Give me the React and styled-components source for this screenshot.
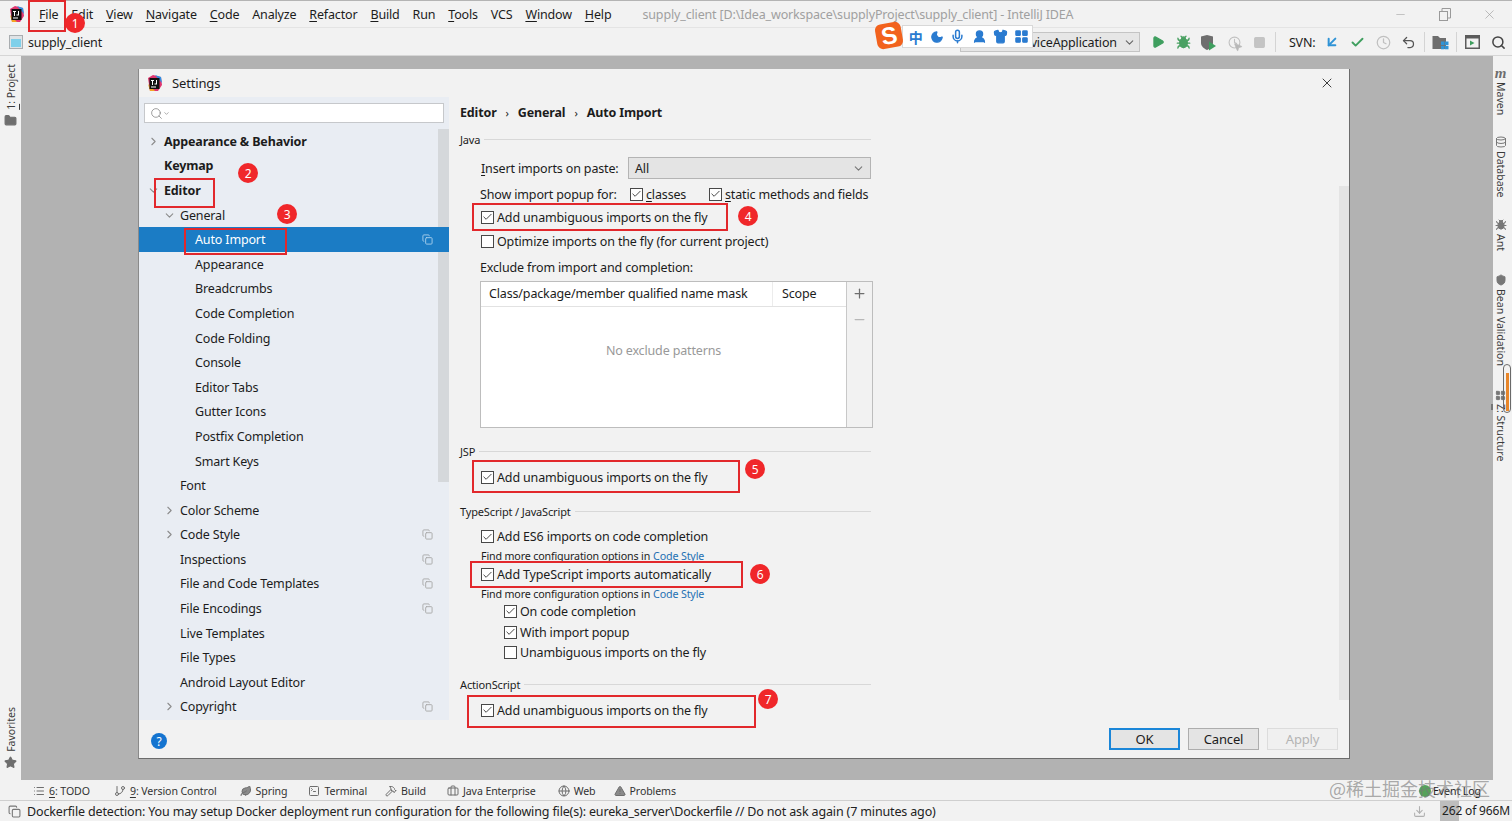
import React from "react";
import styled, { createGlobalStyle } from "styled-components";
import {
  ArrowDownLeft,
  Briefcase,
  Bug,
  Check,
  ChevronDown,
  ChevronRight,
  Clock,
  Copy,
  Database,
  Download,
  Folder,
  GitBranch,
  Globe,
  Hammer,
  LayoutGrid,
  Leaf,
  List,
  Mic,
  Minus,
  Moon,
  MousePointer2,
  Play,
  Plus,
  Search,
  Shield,
  Shirt,
  Square,
  SquareTerminal,
  Star,
  TriangleAlert,
  Undo2,
  UserRound,
  X,
} from "lucide-react";

const GlobalStyle = createGlobalStyle`
  html, body {
    margin: 0;
    padding: 0;
    background: #f2f2f2;
  }
  * {
    box-sizing: border-box;
  }
  u {
    text-underline-offset: 2px;
  }
`;

const Page = styled.div`
  position: relative;
  display: flex;
  flex-direction: column;
  width: 1512px;
  height: 821px;
  overflow: hidden;
  background: #f2f2f2;
  color: #1c1c1c;
  font-family: "Noto Sans", "Liberation Sans", sans-serif;
  font-size: 12.5px;
  letter-spacing: -0.15px;
  white-space: nowrap;
`;

const MenuBar = styled.div`
  display: flex;
  align-items: center;
  height: 28px;
  padding-left: 9px;
  border-top: 1px solid #b4b4b4;
  border-bottom: 1px solid #e4e4e4;
`;

const MenuItems = styled.div`
  display: flex;
  gap: 12.9px;
  margin-left: 15px;
`;

const WindowTitle = styled.div`
  margin-left: 31px;
  color: #a0a0a0;
  flex: 1;
`;

const WindowControls = styled.div`
  display: flex;
  align-items: center;
  gap: 31px;
  padding-right: 15px;
  color: #9a9a9a;
`;

const Toolbar = styled.div`
  display: flex;
  align-items: center;
  height: 28px;
  padding: 1px 1px 0 9px;
  border-bottom: 1px solid #d6d6d6;
`;

const ProjectName = styled.span`
  margin-left: 5px;
`;

const ToolGroup = styled.div`
  display: flex;
  align-items: center;
  margin-left: auto;
`;

const RunCombo = styled.div`
  display: flex;
  align-items: center;
  justify-content: flex-end;
  width: 180px;
  height: 20px;
  margin-right: 5px;
  padding-right: 3px;
  gap: 6px;
  background: #e6e6e6;
  border: 1px solid #c4c4c4;
`;

const ToolButton = styled.div`
  position: relative;
  display: flex;
  align-items: center;
  justify-content: center;
  width: 25.5px;
  height: 24px;
  color: ${(props) => props.$color || "#6e6e6e"};
`;

const CursorBadge = styled.span`
  position: absolute;
  right: 4px;
  bottom: 2px;
  display: flex;
  color: #b8b8b8;
`;

const ToolDivider = styled.div`
  width: 1px;
  height: 20px;
  margin: 0 2.75px;
  background: #d4d4d4;
`;

const SvnLabel = styled.span`
  margin: 0 4px 0 10px;
`;

const Workspace = styled.div`
  display: flex;
  height: 724px;
`;

const Stripe = styled.div`
  display: flex;
  flex-direction: column;
  align-items: center;
  justify-content: ${(props) => props.$justify || "flex-start"};
  flex: none;
  width: ${(props) => props.$width}px;
  padding: ${(props) => props.$padding};
  color: #3a3a3a;
  font-size: 10.5px;
  letter-spacing: 0;
`;

const StripeGroup = styled.div`
  display: flex;
  flex-direction: column;
  align-items: center;
  gap: 4px;
  color: #6e6e6e;
`;

const StripeItem = styled.div`
  display: flex;
  flex-direction: column;
  align-items: center;
  gap: 3px;
  margin-bottom: ${(props) => props.$gap || 0}px;
  color: #777;
`;

const StripeText = styled.span`
  writing-mode: vertical-rl;
  color: #3a3a3a;
  transform: ${(props) => (props.$flip ? "rotate(180deg)" : "none")};
  line-height: 14px;
`;

const MavenMark = styled.span`
  font-family: "Liberation Serif", serif;
  font-style: italic;
  font-weight: 700;
  font-size: 15px;
  line-height: 12px;
  color: #6e6e6e;
`;

const Backdrop = styled.div`
  flex: 1;
  padding: 13px 143px 21px 117px;
  background: #b2b2b2;
`;

const Dialog = styled.div`
  display: flex;
  flex-direction: column;
  height: 690px;
  background: #f2f2f2;
  border-right: 1px solid #6c6c6c;
  border-bottom: 1px solid #6c6c6c;
  border-left: 1px solid #8a8a8a;
`;

const DialogTitle = styled.div`
  display: flex;
  align-items: center;
  height: 28px;
  flex: none;
  padding: 0 14px 0 8px;
  gap: 10px;
  font-size: 13px;
`;

const CloseButton = styled.div`
  display: flex;
  margin-left: auto;
  color: #222;
`;

const DialogBody = styled.div`
  display: flex;
  height: 623px;
  flex: none;
  overflow: hidden;
`;

const Sidebar = styled.div`
  position: relative;
  flex: none;
  width: 310px;
  background: #e9edf3;
`;

const SearchBox = styled.div`
  display: flex;
  align-items: center;
  height: 20px;
  margin: 6px 5px 6px 5px;
  padding-left: 5px;
  background: #fff;
  border: 1px solid #c6c8cb;
  color: #777;
`;

const SideThumb = styled.div`
  position: absolute;
  top: 32px;
  right: 0;
  width: 11px;
  height: 353px;
  background: #d5d8db;
`;

const TreeRow = styled.div`
  position: relative;
  display: flex;
  align-items: center;
  height: 24.6px;
  padding-left: ${(props) => props.$indent}px;
  background: ${(props) => (props.$selected ? "#1b7cc5" : "transparent")};
  color: ${(props) => (props.$selected ? "#fff" : "#1c1c1c")};
  font-weight: ${(props) => (props.$bold ? 700 : 400)};
`;

const TreeArrow = styled.span`
  position: absolute;
  left: ${(props) => props.$indent - 17}px;
  display: flex;
  color: #8c8c8c;
`;

const TreeCopy = styled.span`
  position: absolute;
  right: 16px;
  display: flex;
  color: ${(props) => (props.$selected ? "#a9cfeb" : "#a8a8a8")};
`;

const Panel = styled.div`
  position: relative;
  flex: 1;
  padding-left: 11px;
`;

const PanelThumb = styled.div`
  position: absolute;
  top: 89px;
  right: 0;
  width: 10px;
  height: 514px;
  background: #e4e4e4;
`;

const Breadcrumb = styled.div`
  display: flex;
  align-items: center;
  gap: 9px;
  height: 30px;
  font-weight: 700;
`;

const CrumbSep = styled.span`
  font-weight: 400;
  font-size: 11px;
`;

const Form = styled.div`
  width: 411px;
`;

const SectionTitle = styled.div`
  display: flex;
  align-items: center;
  gap: 4px;
  height: ${(props) => props.$h}px;
  margin-top: ${(props) => props.$top || 0}px;
  padding-bottom: 2px;
  font-size: 11px;

  &::after {
    content: "";
    flex: 1;
    height: 1px;
    background: #d8d8d8;
  }
`;

const Row = styled.div`
  display: flex;
  align-items: center;
  height: ${(props) => props.$h}px;
  padding-left: ${(props) => props.$indent || 21}px;
  gap: 3px;
`;

const FieldLabel = styled.span`
  flex: none;
  width: ${(props) => props.$width}px;
`;

const OptionCell = styled.div`
  display: flex;
  align-items: center;
  flex: none;
  width: ${(props) => props.$width}px;
  gap: 3px;
`;

const Box = styled.span`
  display: flex;
  align-items: center;
  justify-content: center;
  flex: none;
  width: 13px;
  height: 13px;
  background: #fff;
  border: 1px solid #484848;
  color: #222;
`;

const ComboField = styled.div`
  display: flex;
  align-items: center;
  justify-content: space-between;
  width: 244px;
  height: 22px;
  margin-left: -3px;
  padding: 0 5px 0 6px;
  background: #e4e4e4;
  border: 1px solid #b4b4b4;
  color: #222;
`;

const Hint = styled.div`
  display: flex;
  align-items: center;
  height: 13px;
  padding-left: 21px;
  font-size: 10.7px;
  gap: 3px;
`;

const HintLink = styled.span`
  color: #2470b3;
`;

const ExcludeTable = styled.div`
  display: grid;
  grid-template-columns: 1fr 25px;
  width: 393px;
  height: 147px;
  margin-left: 20px;
  border: 1px solid #bdbdbd;
`;

const TableMain = styled.div`
  display: flex;
  flex-direction: column;
  background: #fff;
  border-right: 1px solid #c8c8c8;
`;

const TableHead = styled.div`
  display: grid;
  grid-template-columns: 292px 1fr;
  height: 25px;
  border-bottom: 1px solid #e2e2e2;
`;

const HeadCell = styled.div`
  display: flex;
  align-items: center;
  padding: 0 0 2px ${(props) => props.$pad}px;
  border-right: ${(props) => (props.$divider ? "1px solid #ececec" : "none")};
`;

const EmptyText = styled.div`
  display: flex;
  align-items: center;
  justify-content: center;
  flex: 1;
  padding: 0 0 34px 0;
  color: #999;
`;

const TableTools = styled.div`
  display: flex;
  flex-direction: column;
  align-items: center;
  gap: 11px;
  padding-top: 4px;
`;

const ToolGlyph = styled.span`
  display: flex;
  color: ${(props) => props.$color};
`;

const DialogFooter = styled.div`
  display: flex;
  align-items: center;
  height: 38px;
  padding: 0 11px 0 12px;
  gap: 8px;
`;

const HelpButton = styled.div`
  display: flex;
  align-items: center;
  justify-content: center;
  width: 16px;
  height: 16px;
  margin: 4px auto 0 0;
  border-radius: 50%;
  background: #1474d0;
  color: #fff;
  font-size: 12px;
`;

const DialogButton = styled.div`
  display: flex;
  align-items: center;
  justify-content: center;
  width: 71px;
  height: 22px;
  font-size: 13px;
  background: ${(props) => (props.$disabled ? "#f0f0f0" : "#e4e4e4")};
  border: ${(props) => (props.$primary ? "2px solid #1b86d8" : "1px solid")};
  border-color: ${(props) =>
    props.$primary ? "#1b86d8" : props.$disabled ? "#dcdcdc" : "#adadad"};
  color: ${(props) => (props.$disabled ? "#b4b4b4" : "#1c1c1c")};
`;

const ToolWindowBar = styled.div`
  display: flex;
  align-items: center;
  height: 21px;
  padding: 1px 0 0 33px;
  border-bottom: 1px solid #cfcfcf;
  font-size: 10.6px;
  letter-spacing: -0.1px;
`;

const ToolTab = styled.div`
  display: flex;
  align-items: center;
  gap: 4px;
  margin-right: ${(props) => props.$gap}px;
  color: #333;

  svg {
    color: #6e6e6e;
  }
`;

const EventLog = styled.div`
  display: flex;
  align-items: center;
  gap: 2px;
  margin-left: auto;
  padding-right: 31px;
`;

const EventDot = styled.span`
  width: 12px;
  height: 12px;
  border-radius: 50%;
  background: #55a35a;
`;

const StatusBar = styled.div`
  display: flex;
  align-items: center;
  height: 20px;
  padding-left: 8px;
  gap: 6px;
  color: #222;
`;

const MemoryArea = styled.div`
  display: flex;
  align-items: center;
  margin-left: auto;
  gap: 14px;
  color: #b0b0b0;
`;

const MemoryText = styled.div`
  height: 20px;
  padding: 0 2px;
  line-height: 20px;
  font-size: 12px;
  color: #222;
  background: linear-gradient(to right, #bdbdbd 19px, transparent 19px);
`;

const ImeBar = styled.div`
  position: absolute;
  top: 25px;
  left: 902px;
  display: flex;
  align-items: center;
  width: 131px;
  height: 23px;
  padding-left: 2px;
  background: #fff;
  border: 1px solid #d8d8d8;
  color: #2a7bd0;
`;

const ImeCell = styled.span`
  display: flex;
  align-items: center;
  justify-content: center;
  width: 21.5px;
  font-family: "Noto Sans CJK SC", sans-serif;
  font-size: 14px;
  font-weight: 700;
`;

const ImeLogo = styled.div`
  position: absolute;
  top: 23px;
  left: 876px;
  display: flex;
  align-items: center;
  justify-content: center;
  width: 26px;
  height: 25px;
  border-radius: 6px;
  background: #f2621d;
  color: #fff;
  font-family: "Liberation Sans", sans-serif;
  font-size: 24px;
  font-weight: 700;
  transform: rotate(-10deg);
`;

const Mark = styled.div`
  position: absolute;
  top: ${(props) => props.$y}px;
  left: ${(props) => props.$x}px;
  width: ${(props) => props.$w}px;
  height: ${(props) => props.$h}px;
  border: 2px solid #e2282c;
`;

const Badge = styled.div`
  position: absolute;
  top: ${(props) => props.$y - 10}px;
  left: ${(props) => props.$x - 10}px;
  display: flex;
  align-items: center;
  justify-content: center;
  width: 20px;
  height: 20px;
  border-radius: 50%;
  background: #f0272a;
  color: #fff;
  font-size: 12px;
`;

const Watermark = styled.div`
  position: absolute;
  top: 775px;
  left: 1329px;
  color: rgba(120, 120, 120, 0.62);
  font-family: "Noto Sans CJK SC", sans-serif;
  font-size: 18px;
  letter-spacing: 0;
  line-height: 26px;
`;

const MemoryPill = styled.div`
  position: absolute;
  top: 364px;
  left: 1503px;
  width: 8px;
  height: 49px;
  border: 1px solid #6a6a6a;
  border-radius: 4px;

  &::after {
    content: "";
    position: absolute;
    top: 8px;
    left: 2px;
    width: 3px;
    height: 38px;
    background: #e8862a;
  }
`;

// the IntelliJ mark, used small in the menu bar and in the dialog title
function IdeaLogo() {
  return (
    <svg width="15" height="17" viewBox="0 0 15 17">
      <path d="M1 3 L6 0 L14 2 L15 10 L11 16 L3 16 Z" fill="#e0366f" />
      <path d="M8 0 L14 2 L15 8 Z" fill="#2f8fe0" />
      <path d="M1 9 L3 16 L8 16 Z" fill="#f4a623" />
      <rect x="2.5" y="3" width="10" height="11" fill="#111" />
      <rect x="4" y="11.5" width="5" height="1" fill="#fff" />
      <rect x="4" y="5" width="3" height="1" fill="#fff" />
      <rect x="5" y="5" width="1" height="5" fill="#fff" />
      <rect x="9" y="5" width="1" height="4" fill="#fff" />
      <rect x="7.5" y="8.5" width="2.5" height="1" fill="#fff" />
    </svg>
  );
}

function ProjectIcon() {
  return (
    <svg width="14" height="14" viewBox="0 0 14 14">
      <rect x="0.5" y="0.5" width="13" height="13" fill="#dfe3e6" stroke="#a9adb0" />
      <rect x="2" y="4" width="10" height="8" fill="#7fd0ea" />
    </svg>
  );
}

function RestoreIcon() {
  return (
    <svg width="13" height="13" viewBox="0 0 13 13" fill="none" stroke="currentColor">
      <rect x="1.5" y="3.5" width="8" height="9" />
      <path d="M4 3.5 V0.5 H12.5 V10 H9.5" />
    </svg>
  );
}

function CoverageIcon() {
  return (
    <svg width="17" height="17" viewBox="0 0 17 17">
      <path d="M1 2.5 L7 1 L13 2.5 V9 C13 12.5 10 14.5 7 16 C4 14.5 1 12.5 1 9 Z" fill="#6e6e6e" />
      <path d="M9 7.5 L16 12 L9 16.5 Z" fill="#3f9f5f" />
    </svg>
  );
}

function VcsFolderIcon() {
  return (
    <svg width="17" height="15" viewBox="0 0 17 15">
      <path d="M0.5 1 H6 L8 3 H14 V14 H0.5 Z" fill="#6e6e6e" />
      <rect x="9" y="6.5" width="3.5" height="3.5" fill="#2f93d6" />
      <rect x="13" y="6.5" width="3.5" height="3.5" fill="#2f93d6" />
      <rect x="9" y="10.8" width="3.5" height="3.5" fill="#2f93d6" />
      <rect x="13" y="10.8" width="3.5" height="3.5" fill="#2f93d6" />
    </svg>
  );
}

function RunWindowIcon() {
  return (
    <svg width="15" height="14" viewBox="0 0 15 14">
      <rect x="0.75" y="0.75" width="13.5" height="12.5" fill="none" stroke="#5c5c5c" strokeWidth="1.5" />
      <rect x="1" y="1" width="13" height="2.5" fill="#5c5c5c" />
      <path d="M5 5.5 L9.5 8 L5 10.5 Z" fill="#3f9f5f" />
    </svg>
  );
}

function Checkbox({ checked }) {
  return (
    <Box>
      {checked && <Check size={12} strokeWidth={1.8} />}
    </Box>
  );
}

function CheckRow({ h, indent, checked, children }) {
  return (
    <Row $h={h} $indent={indent}>
      <Checkbox checked={checked} />
      <span>{children}</span>
    </Row>
  );
}

const menus = [
  ["F", "ile"],
  ["E", "dit"],
  ["V", "iew"],
  ["N", "avigate"],
  ["C", "ode"],
  ["", "Analyze"],
  ["R", "efactor"],
  ["B", "uild"],
  ["", "Run"],
  ["T", "ools"],
  ["", "VCS"],
  ["W", "indow"],
  ["H", "elp"],
];

const tree = [
  { label: "Appearance & Behavior", indent: 25, bold: true, arrow: "right" },
  { label: "Keymap", indent: 25, bold: true },
  { label: "Editor", indent: 25, bold: true, arrow: "down" },
  { label: "General", indent: 41, arrow: "down" },
  { label: "Auto Import", indent: 56, selected: true, copy: true },
  { label: "Appearance", indent: 56 },
  { label: "Breadcrumbs", indent: 56 },
  { label: "Code Completion", indent: 56 },
  { label: "Code Folding", indent: 56 },
  { label: "Console", indent: 56 },
  { label: "Editor Tabs", indent: 56 },
  { label: "Gutter Icons", indent: 56 },
  { label: "Postfix Completion", indent: 56 },
  { label: "Smart Keys", indent: 56 },
  { label: "Font", indent: 41 },
  { label: "Color Scheme", indent: 41, arrow: "right" },
  { label: "Code Style", indent: 41, arrow: "right", copy: true },
  { label: "Inspections", indent: 41, copy: true },
  { label: "File and Code Templates", indent: 41, copy: true },
  { label: "File Encodings", indent: 41, copy: true },
  { label: "Live Templates", indent: 41 },
  { label: "File Types", indent: 41 },
  { label: "Android Layout Editor", indent: 41 },
  { label: "Copyright", indent: 41, arrow: "right", copy: true },
];

const marks = [
  { x: 28, y: 0, w: 38, h: 32 },
  { x: 154, y: 178, w: 61, h: 30 },
  { x: 184, y: 228, w: 103, h: 27 },
  { x: 472, y: 203, w: 256, h: 28 },
  { x: 472, y: 460, w: 268, h: 33 },
  { x: 470, y: 561, w: 273, h: 27 },
  { x: 467, y: 695, w: 289, h: 33 },
];

const badges = [
  { n: 1, x: 75, y: 23 },
  { n: 2, x: 248, y: 173 },
  { n: 3, x: 287, y: 214 },
  { n: 4, x: 748, y: 216 },
  { n: 5, x: 755, y: 469 },
  { n: 6, x: 760, y: 574 },
  { n: 7, x: 768, y: 699 },
];

const tabs = [
  { icon: <List size={12} />, text: <><u>6</u>: TODO</>, gap: 24 },
  { icon: <GitBranch size={12} />, text: <><u>9</u>: Version Control</>, gap: 23 },
  { icon: <Leaf size={12} fill="#8a8a8a" />, text: "Spring", gap: 21 },
  { icon: <SquareTerminal size={12} />, text: "Terminal", gap: 18 },
  { icon: <Hammer size={12} />, text: "Build", gap: 21 },
  { icon: <Briefcase size={12} />, text: "Java Enterprise", gap: 22 },
  { icon: <Globe size={12} />, text: "Web", gap: 18 },
  { icon: <TriangleAlert size={12} fill="#8a8a8a" />, text: "Problems", gap: 0 },
];

export default function App() {
  return (
    <Page>
      <GlobalStyle />
      <MenuBar>
        <IdeaLogo />
        <MenuItems>
          {menus.map(([key, rest]) => (
            <span key={key + rest}>
              {key && <u>{key}</u>}
              {rest}
            </span>
          ))}
        </MenuItems>
        <WindowTitle>
          supply_client [D:\Idea_workspace\supplyProject\supply_client] - IntelliJ IDEA
        </WindowTitle>
        <WindowControls>
          <Minus size={13} strokeWidth={1} />
          <RestoreIcon />
          <X size={15} strokeWidth={1} />
        </WindowControls>
      </MenuBar>

      <Toolbar>
        <ProjectIcon />
        <ProjectName>supply_client</ProjectName>
        <ToolGroup>
          <RunCombo>
            ServiceApplication
            <ChevronDown size={13} color="#666" />
          </RunCombo>
          <ToolButton $color="#3f9f5f"><Play size={14} fill="#3f9f5f" /></ToolButton>
          <ToolButton $color="#4aa163"><Bug size={15} fill="#4aa163" /></ToolButton>
          <ToolButton><CoverageIcon /></ToolButton>
          <ToolButton $color="#c0c0c0">
            <Clock size={13} />
            <CursorBadge><MousePointer2 size={10} fill="#b8b8b8" /></CursorBadge>
          </ToolButton>
          <ToolButton $color="#c4c4c4"><Square size={13} fill="#c4c4c4" /></ToolButton>
          <ToolDivider />
          <SvnLabel>SVN:</SvnLabel>
          <ToolButton $color="#2f93d6"><ArrowDownLeft size={16} strokeWidth={3} /></ToolButton>
          <ToolButton $color="#3f9f5f"><Check size={15} strokeWidth={3} /></ToolButton>
          <ToolButton $color="#c0c0c0"><Clock size={15} /></ToolButton>
          <ToolButton $color="#555"><Undo2 size={15} /></ToolButton>
          <ToolDivider />
          <ToolButton><VcsFolderIcon /></ToolButton>
          <ToolDivider />
          <ToolButton><RunWindowIcon /></ToolButton>
          <ToolButton $color="#444"><Search size={15} strokeWidth={2.4} /></ToolButton>
        </ToolGroup>
      </Toolbar>

      <Workspace>
        <Stripe $width={21} $justify="space-between" $padding="8px 0 11px">
          <StripeGroup>
            <StripeText $flip><u>1</u>: Project</StripeText>
            <Folder size={13} fill="#6e6e6e" />
          </StripeGroup>
          <StripeGroup>
            <StripeText $flip>Favorites</StripeText>
            <Star size={13} fill="#6e6e6e" />
          </StripeGroup>
        </Stripe>

        <Backdrop>
          <Dialog>
            <DialogTitle>
              <IdeaLogo />
              <span>Settings</span>
              <CloseButton><X size={16} strokeWidth={1.3} /></CloseButton>
            </DialogTitle>
            <DialogBody>
              <Sidebar>
                <SearchBox>
                  <Search size={13} strokeWidth={1.3} />
                  <ChevronDown size={7} />
                </SearchBox>
                <SideThumb />
                {tree.map((item) => (
                  <TreeRow
                    key={item.label}
                    $indent={item.indent}
                    $bold={item.bold}
                    $selected={item.selected}
                  >
                    {item.arrow === "right" && (
                      <TreeArrow $indent={item.indent}><ChevronRight size={13} /></TreeArrow>
                    )}
                    {item.arrow === "down" && (
                      <TreeArrow $indent={item.indent}><ChevronDown size={13} /></TreeArrow>
                    )}
                    {item.label}
                    {item.copy && (
                      <TreeCopy $selected={item.selected}><Copy size={11} /></TreeCopy>
                    )}
                  </TreeRow>
                ))}
              </Sidebar>

              <Panel>
                <PanelThumb />
                <Breadcrumb>
                  Editor <CrumbSep>›</CrumbSep> General <CrumbSep>›</CrumbSep> Auto Import
                </Breadcrumb>
                <Form>
                  <SectionTitle $h={26}>Java</SectionTitle>
                  <Row $h={30}>
                    <FieldLabel $width={147}><u>I</u>nsert imports on paste:</FieldLabel>
                    <ComboField>
                      All
                      <ChevronDown size={13} color="#777" />
                    </ComboField>
                  </Row>
                  <Row $h={22} $indent={20}>
                    <FieldLabel $width={147}>Show import popup for:</FieldLabel>
                    <OptionCell $width={76}>
                      <Checkbox checked />
                      <span><u>c</u>lasses</span>
                    </OptionCell>
                    <OptionCell $width={165}>
                      <Checkbox checked />
                      <span><u>s</u>tatic methods and fields</span>
                    </OptionCell>
                  </Row>
                  <CheckRow h={24} checked>Add unambiguous imports on the fly</CheckRow>
                  <CheckRow h={24}>Optimize imports on the fly (for current project)</CheckRow>
                  <Row $h={28} $indent={20}>Exclude from import and completion:</Row>
                  <ExcludeTable>
                    <TableMain>
                      <TableHead>
                        <HeadCell $pad={8} $divider>Class/package/member qualified name mask</HeadCell>
                        <HeadCell $pad={9}>Scope</HeadCell>
                      </TableHead>
                      <EmptyText>No exclude patterns</EmptyText>
                    </TableMain>
                    <TableTools>
                      <ToolGlyph $color="#6e6e6e"><Plus size={15} /></ToolGlyph>
                      <ToolGlyph $color="#b8b8b8"><Minus size={15} /></ToolGlyph>
                    </TableTools>
                  </ExcludeTable>

                  <SectionTitle $h={24} $top={12}>JSP</SectionTitle>
                  <CheckRow h={26} checked>Add unambiguous imports on the fly</CheckRow>

                  <SectionTitle $h={24} $top={10}>TypeScript / JavaScript</SectionTitle>
                  <CheckRow h={25} checked>Add ES6 imports on code completion</CheckRow>
                  <Hint>Find more configuration options in <HintLink>Code Style</HintLink></Hint>
                  <CheckRow h={25} checked>Add TypeScript imports automatically</CheckRow>
                  <Hint>Find more configuration options in <HintLink>Code Style</HintLink></Hint>
                  <CheckRow h={22} indent={44} checked>On code completion</CheckRow>
                  <CheckRow h={20} indent={44} checked>With import popup</CheckRow>
                  <CheckRow h={20} indent={44}>Unambiguous imports on the fly</CheckRow>

                  <SectionTitle $h={24} $top={11}>ActionScript</SectionTitle>
                  <CheckRow h={26} checked>Add unambiguous imports on the fly</CheckRow>
                </Form>
              </Panel>
            </DialogBody>
            <DialogFooter>
              <HelpButton>?</HelpButton>
              <DialogButton $primary>OK</DialogButton>
              <DialogButton>Cancel</DialogButton>
              <DialogButton $disabled>Apply</DialogButton>
            </DialogFooter>
          </Dialog>
        </Backdrop>

        <Stripe $width={19} $padding="11px 4px 0 0">
          <StripeItem $gap={21}>
            <MavenMark>m</MavenMark>
            <StripeText>Maven</StripeText>
          </StripeItem>
          <StripeItem $gap={21}>
            <Database size={12} />
            <StripeText>Database</StripeText>
          </StripeItem>
          <StripeItem $gap={23}>
            <Bug size={12} fill="#777" />
            <StripeText>Ant</StripeText>
          </StripeItem>
          <StripeItem $gap={24}>
            <Shield size={12} fill="#777" />
            <StripeText>Bean Validation</StripeText>
          </StripeItem>
          <StripeItem>
            <LayoutGrid size={11} fill="#777" />
            <StripeText><u>Z</u>: Structure</StripeText>
          </StripeItem>
        </Stripe>
      </Workspace>

      <ToolWindowBar>
        {tabs.map((tab, i) => (
          <ToolTab key={i} $gap={tab.gap}>
            {tab.icon}
            <span>{tab.text}</span>
          </ToolTab>
        ))}
        <EventLog>
          <EventDot />
          Event Log
        </EventLog>
      </ToolWindowBar>

      <StatusBar>
        <Copy size={13} color="#777" />
        Dockerfile detection: You may setup Docker deployment run configuration for the following file(s): eureka_server\Dockerfile // Do not ask again (7 minutes ago)
        <MemoryArea>
          <Download size={13} />
          <MemoryText>262 of 966M</MemoryText>
        </MemoryArea>
      </StatusBar>

      <ImeBar>
        <ImeCell>中</ImeCell>
        <ImeCell><Moon size={14} fill="#2a7bd0" /></ImeCell>
        <ImeCell><Mic size={15} strokeWidth={2.4} /></ImeCell>
        <ImeCell><UserRound size={15} fill="#2a7bd0" /></ImeCell>
        <ImeCell><Shirt size={15} fill="#2a7bd0" /></ImeCell>
        <ImeCell><LayoutGrid size={15} fill="#2a7bd0" /></ImeCell>
      </ImeBar>
      <ImeLogo>S</ImeLogo>

      {marks.map((m) => (
        <Mark key={`${m.x}-${m.y}`} $x={m.x} $y={m.y} $w={m.w} $h={m.h} />
      ))}
      {badges.map((b) => (
        <Badge key={b.n} $x={b.x} $y={b.y}>{b.n}</Badge>
      ))}
      <MemoryPill />
      <Watermark>@稀土掘金技术社区</Watermark>
    </Page>
  );
}
